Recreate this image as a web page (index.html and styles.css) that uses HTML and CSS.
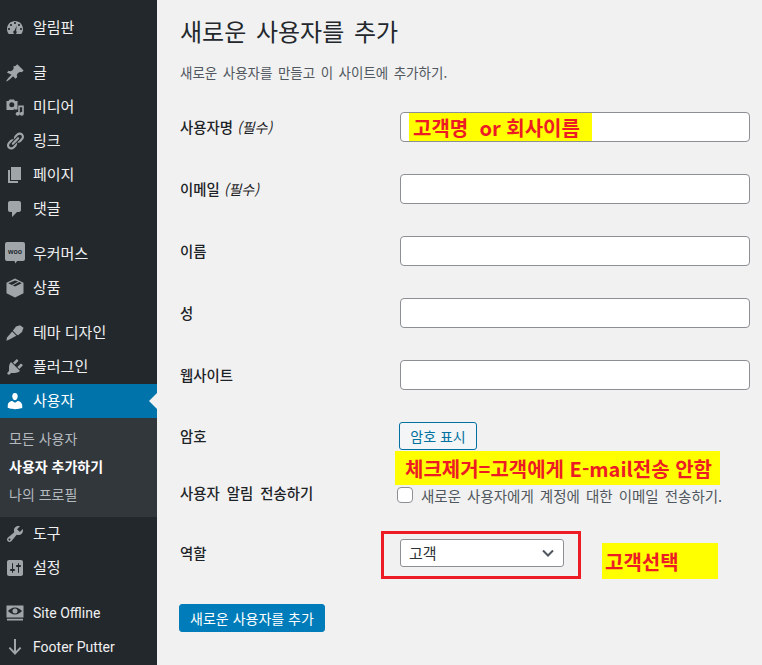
FILE: index.html
```html
<!DOCTYPE html>
<html lang="ko">
<head>
    <meta charset="UTF-8">
    <title>새로운 사용자를 추가</title>
    <link rel="stylesheet" href="styles.css">
</head>
<body>
<div class="wrap">
    <div class="sidebar">
        <ul class="menu">
            <li class="item"><svg class="ico" viewBox="0 0 20 20"><path d="M3.760 16h12.480c1.100-1.370 1.760-3.110 1.760-5 0-4.420-3.580-8-8-8s-8 3.580-8 8c0 1.890.660 3.630 1.760 5zM10 4c.550 0 1 .450 1 1s-.450 1-1 1-1-.450-1-1 .450-1 1-1zM6 6c.550 0 1 .450 1 1s-.450 1-1 1-1-.450-1-1 .450-1 1-1zm8 0c.550 0 1 .450 1 1s-.450 1-1 1-1-.450-1-1 .450-1 1-1zM4 10c.550 0 1 .450 1 1s-.450 1-1 1-1-.450-1-1 .450-1 1-1zm12 0c.550 0 1 .450 1 1s-.450 1-1 1-1-.450-1-1 .450-1 1-1zm-4.300-2.500l-.600 5.300c.400.400.600.900.600 1.400 0 1-.800 1.800-1.700 1.800s-1.700-.800-1.700-1.800c0-.800.500-1.500 1.300-1.700z" fill-rule="evenodd"/></svg>알림판</li>
            <li class="sep"></li>
            <li class="item"><svg class="ico" viewBox="0 0 20 20"><path d="M10.440 3.020l1.820-1.820 6.360 6.350-1.830 1.820c-1.050-.680-2.480-.570-3.410.360l-.750.750c-.920.930-1.040 2.350-.350 3.410l-1.830 1.820-2.410-2.410-2.800 2.790c-.420.420-3.380 2.710-3.800 2.290s1.860-3.390 2.280-3.810l2.790-2.790L1.900 9.600l1.830-1.820c1.050.690 2.480.570 3.400-.360l.750-.750c.930-.920 1.050-2.350.360-3.400z"/></svg>글</li>
            <li class="item"><svg class="ico" viewBox="0 0 20 20"><path d="M4.500 2.500h4.500l1 1.500h2.500v8.500H9.400l-.4-1.200h-.2V13H1.500V4h2zM6.800 5.300a2.500 2.500 0 1 0 0 5 2.500 2.500 0 0 0 0-5z" fill-rule="evenodd"/><path d="M18.800 8.500v8.300a2.100 1.800 0 1 1-1.600-1.700v-4.900h-2.400v6.600a2.100 1.800 0 1 1-1.600-1.700V8.500z"/></svg>미디어</li>
            <li class="item"><svg class="ico" viewBox="0 0 20 20"><path d="M17.740 2.760c1.680 1.690 1.680 4.410 0 6.100l-1.530 1.520c-1.120 1.120-2.700 1.490-4.140 1.120l2.620-2.620.76-.77.76-.76c.84-.84.84-2.200 0-3.040-.84-.85-2.200-.85-3.040 0l-.77.76-3.380 3.380c-.37-1.440 0-3.020 1.120-4.140l1.520-1.530c1.690-1.680 4.420-1.680 6.100 0zM8.590 13.430l5.340-5.340c.42-.42.42-1.100 0-1.520-.44-.43-1.130-.39-1.530 0l-5.330 5.340c-.42.42-.42 1.100 0 1.520.44.43 1.130.39 1.520 0zm-.76 2.290l4.140-4.140c.38 1.440 0 3.020-1.120 4.140l-1.520 1.520c-1.690 1.690-4.410 1.690-6.100 0-1.690-1.680-1.690-4.410 0-6.090l1.520-1.530c1.120-1.120 2.700-1.490 4.140-1.120l-4.140 4.140c-.85.84-.85 2.200 0 3.050.84.84 2.200.84 3.040 0z"/></svg>링크</li>
            <li class="item"><svg class="ico" viewBox="0 0 20 20"><path d="M6 15V2h10v13H6zm-1 1h8v2H3V5h2v11z"/></svg>페이지</li>
            <li class="item"><svg class="ico" viewBox="0 0 20 20"><path d="M5 2h9c1.100 0 2 .9 2 2v7c0 1.100-.9 2-2 2h-2l-5 5v-5H5c-1.100 0-2-.9-2-2V4c0-1.100.9-2 2-2z"/></svg>댓글</li>
            <li class="sep"></li>
            <li class="item"><svg class="ico ico-woo" viewBox="0 0 20 22"><path d="M2 0h16a2 2 0 0 1 2 2v15a2 2 0 0 1-2 2h-6l-1.500 2.500L9.500 19H2a2 2 0 0 1-2-2V2a2 2 0 0 1 2-2z"/><text class="woo" x="10" y="12" text-anchor="middle">woo</text></svg>우커머스</li>
            <li class="item"><svg class="ico" viewBox="0 0 20 20"><path d="M10 .5l8.500 4.300v10.400L10 19.500l-8.500-4.300V4.800zM3.300 5.200L10 8.600l6.700-3.400-2.400-1.200-6.600 3.400-.9-.5 6.500-3.400L10 2.500z" fill-rule="evenodd"/></svg>상품</li>
            <li class="sep"></li>
            <li class="item"><svg class="ico" viewBox="0 0 20 20"><path d="M11 3.500L15 2.300l3.500 2.500-1.500 4.300-4 3.100-1.200-.4-4-4z"/><path d="M7.200 8.600l4.200 4.200-2 .9-5 2.800-3 1.300.6-3.200z"/></svg>테마 디자인</li>
            <li class="item"><svg class="ico" viewBox="0 0 20 20"><path d="M13.110 4.360L9.870 7.600 8 5.730l3.240-3.240c.35-.34 1.050-.2 1.560.32.52.51.66 1.210.31 1.550zm-8 1.770l.91-1.120 9.010 9.010-1.190.84c-.71.71-2.630 1.160-3.820 1.160H6.140L4.900 17.260c-.59.59-1.540.59-2.120 0-.59-.58-.59-1.530 0-2.120l1.240-1.240v-3.880c0-1.130.52-3.070 1.090-3.890zm7.260 3.970l3.240-3.240c.34-.35 1.040-.21 1.550.31.52.51.66 1.210.31 1.550l-3.240 3.250z"/></svg>플러그인</li>
            <li class="item active"><svg class="ico" viewBox="0 0 20 20"><path d="M10 9.250c-2.270 0-2.730-3.440-2.730-3.440C7 4.020 7.820 2 9.970 2c2.160 0 2.980 2.020 2.710 3.810 0 0-.41 3.440-2.680 3.440zm0 2.570L12.720 10c2.390 0 4.520 2.330 4.520 4.530v2.490s-3.650 1.130-7.240 1.130c-3.650 0-7.240-1.130-7.240-1.130v-2.490c0-2.250 1.940-4.480 4.470-4.480z"/></svg>사용자</li>
            <li class="sub">
                <a class="sub-link">모든 사용자</a>
                <a class="sub-link current">사용자 추가하기</a>
                <a class="sub-link">나의 프로필</a>
            </li>
            <li class="item"><svg class="ico" viewBox="0 0 20 20"><path d="M16.680 9.770c-1.340 1.340-3.300 1.670-4.950.99l-5.410 6.520c-.99.99-2.590.99-3.570 0-.99-.98-.99-2.580 0-3.570l6.520-5.420c-.68-1.650-.35-3.610.99-4.950 1.280-1.280 3.120-1.620 4.720-1.060l-2.890 2.890 2.820 2.820 2.860-2.870c.53 1.580.18 3.410-1.090 4.670zM3.810 16.210c.4.390 1.030.39 1.420 0 .4-.4.4-1.030 0-1.430-.39-.39-1.020-.39-1.420 0-.4.4-.4 1.030 0 1.430z"/></svg>도구</li>
            <li class="item"><svg class="ico" viewBox="0 0 20 20"><path d="M18 16V4c0-1.100-.9-2-2-2H4c-1.100 0-2 .9-2 2v12c0 1.100.9 2 2 2h12c1.100 0 2-.9 2-2zM8 11h1c.55 0 1 .45 1 1s-.45 1-1 1H8v1.500c0 .28-.22.5-.5.5s-.5-.22-.5-.5V13H6c-.55 0-1-.45-1-1s.45-1 1-1h1V5.500c0-.28.22-.5.5-.5s.5.22.5.5V11zm5-2h-1c-.55 0-1-.45-1-1s.45-1 1-1h1V5.500c0-.28.22-.5.5-.5s.5.22.5.5V7h1c.55 0 1 .45 1 1s-.45 1-1 1h-1v5.500c0 .28-.22.5-.5.5s-.5-.22-.5-.5V9z"/></svg>설정</li>
            <li class="sep"></li>
            <li class="item latin"><svg class="ico" viewBox="0 0 20 20"><path d="M1.500 2.500h17v12h-17zM10 4.500c-3 0-5.500 2-7 3.500 1.500 1.500 4 3.500 7 3.500s5.500-2 7-3.500c-1.500-1.500-4-3.500-7-3.500zM10 5.500a2.500 2.500 0 1 1 0 5 2.500 2.500 0 0 1 0-5zM2 15.800h16v1.700H2z" fill-rule="evenodd"/></svg>Site Offline</li>
            <li class="item latin"><svg class="ico" viewBox="0 0 20 20"><path d="M9 2h2v12l4-4 1.300 1.300L10 18l-6.300-6.700L5 10l4 4z"/></svg>Footer Putter</li>
        </ul>
    </div>

    <div class="content">
        <h1 class="title">새로운 사용자를 추가</h1>
        <p class="desc">새로운 사용자를 만들고 이 사이트에 추가하기.</p>

        <div class="form">
            <div class="row"><label class="lbl">사용자명 <em>(필수)</em></label><input class="txt" type="text"></div>
            <div class="row"><label class="lbl">이메일 <em>(필수)</em></label><input class="txt" type="text"></div>
            <div class="row"><label class="lbl">이름</label><input class="txt" type="text"></div>
            <div class="row"><label class="lbl">성</label><input class="txt" type="text"></div>
            <div class="row"><label class="lbl">웹사이트</label><input class="txt" type="text"></div>
            <div class="row row-pass"><label class="lbl">암호</label><button class="btn" type="button">암호 표시</button></div>
            <div class="row row-notify"><label class="lbl">사용자 알림 전송하기</label>
                <span class="check"><span class="box"></span>새로운 사용자에게 계정에 대한 이메일 전송하기.</span>
            </div>
            <div class="row row-role"><label class="lbl">역할</label>
                <div class="select">고객
                    <svg class="caret" viewBox="0 0 12 8"><path d="M1 1.500l5 5 5-5" fill="none" stroke="#50575e" stroke-width="2"/></svg>
                </div>
            </div>
        </div>
        <button class="primary" type="button">새로운 사용자를 추가</button>

        <!-- 캡처 위에 덧칠한 표시들 -->
        <div class="mark mark-name">고객명&nbsp; or 회사이름</div>
        <div class="mark mark-mail">체크제거=고객에게 E-mail전송 안함</div>
        <div class="mark mark-role">고객선택</div>
        <div class="redbox"></div>
    </div>
</div>
</body>
</html>
```

FILE: styles.css
```css
html, body {
    margin: 0;
    height: 665px;
    overflow: hidden;
    background: #f1f1f1;
}
body {
    font-family: "Noto Sans CJK KR", "Liberation Sans", sans-serif;
    font-size: 13px;
    color: #2c3338;
}
.wrap {
    display: flex;
    height: 665px;
}

/* sidebar */
.sidebar {
    width: 157px;
    flex: none;
    background: #23282d;
    padding-top: 11px;
    box-sizing: border-box;
}
.menu {
    list-style: none;
    margin: 0;
    padding: 0;
}
.item {
    position: relative;
    display: flex;
    align-items: center;
    height: 34px;
    box-sizing: border-box;
    padding: 0 0 4px 33px;
    color: #f0f0f1;
    font-size: 15px;
}
.latin {
    padding-bottom: 0;
    font-family: Roboto, sans-serif;
    font-size: 14px;
}
.sep {
    height: 11px;
}
.ico {
    position: absolute;
    left: 5px;
    top: 7px;
    width: 20px;
    height: 20px;
    fill: #a0a5aa;
}
.ico-woo {
    top: 5px;
    height: 22px;
}
.woo {
    font: 700 7px "Liberation Sans", sans-serif;
    fill: #23282d;
}
.active {
    background: #0073aa;
    color: #fff;
}
.active .ico {
    fill: #fff;
}
.active::after {
    content: "";
    position: absolute;
    right: 0;
    top: 9px;
    border: 8px solid transparent;
    border-right-color: #f1f1f1;
    border-left-width: 0;
}
.sub {
    background: #32373c;
    padding: 6px 0 9px;
    display: flex;
    flex-direction: column;
}
.sub-link {
    height: 28px;
    line-height: 28px;
    padding-left: 9px;
    color: #b4b9be;
    font-size: 14px;
}
.current {
    color: #fff;
    font-weight: 700;
}

/* content */
.content {
    position: relative;
    flex: 1;
    padding: 0 12px 0 23px;
}
.title {
    margin: 0;
    padding-top: 14px;
    font-size: 24px;
    font-weight: 400;
    line-height: 34px;
    word-spacing: 3px;
    color: #23282d;
}
.desc {
    margin: 15px 0 0;
    font-size: 13.5px;
    line-height: 18px;
    word-spacing: 1.7px;
    color: #50575e;
}
.form {
    margin-top: 31px;
}
.row {
    display: flex;
    align-items: center;
    height: 30px;
    margin-bottom: 32px;
}
.lbl {
    width: 220px;
    flex: none;
    padding-bottom: 2px;
    font-size: 14.4px;
    font-weight: 500;
    word-spacing: 3px;
    color: #1d2327;
}
.lbl em {
    margin-left: -3px;
    font-size: 14px;
    font-weight: 400;
}
.txt {
    width: 350px;
    height: 30px;
    box-sizing: border-box;
    border: 1px solid #8c8f94;
    border-radius: 4px;
    background: #fff;
    padding: 0 8px;
    margin: 0;
}
.btn {
    margin: 0 0 0 -1px;
    width: 78px;
    height: 28px;
    border: 1px solid #0071a1;
    border-radius: 3px;
    background: #f3f5f6;
    color: #0071a1;
    font: 14px "Noto Sans CJK KR", sans-serif;
    padding: 0;
}
.row-pass {
    height: 28px;
    margin-bottom: 30px;
}
.row-notify {
    margin-bottom: 32px;
    height: 28px;
    margin-top: -1px;
}
.check {
    display: flex;
    align-items: center;
    margin-left: -3px;
    margin-top: 4px;
    color: #50575e;
    font-size: 14.5px;
    word-spacing: 2px;
}
.box {
    width: 16px;
    height: 16px;
    box-sizing: border-box;
    border: 1px solid #8c8f94;
    border-radius: 4px;
    background: #fff;
    margin-right: 8px;
}
.row-role {
    height: 28px;
    margin-bottom: 37px;
}
.select {
    width: 164px;
    height: 28px;
    box-sizing: border-box;
    border: 1px solid #8c8f94;
    border-radius: 3px;
    background: #fff;
    padding: 0 8px 2px 8px;
    display: flex;
    align-items: center;
    justify-content: space-between;
    font-size: 15px;
}
.caret {
    width: 12px;
    height: 8px;
    margin: 2px 1px 0 0;
}
.primary {
    display: block;
    margin: 0 0 0 -1px;
    width: 146px;
    height: 28px;
    padding: 0;
    border: 1px solid #007cba;
    border-radius: 3px;
    background: #007cba;
    color: #fff;
    font: 14px "Noto Sans CJK KR", sans-serif;
}

/* 덧칠 */
.mark {
    position: absolute;
    background: #ff0;
    color: #ed1c24;
    font-size: 20px;
    font-weight: 700;
    display: flex;
    align-items: center;
    white-space: nowrap;
}
.mark-name {
    left: 252px;
    top: 113px;
    width: 179px;
    height: 28px;
    padding-left: 4px;
}
.mark-mail {
    left: 238px;
    top: 451px;
    width: 315px;
    height: 34px;
    padding-left: 10px;
}
.mark-role {
    left: 445px;
    top: 543px;
    width: 113px;
    height: 36px;
    padding-left: 3px;
}
.redbox {
    position: absolute;
    left: 224px;
    top: 531px;
    width: 194px;
    height: 42px;
    border: 3px solid #ed1c24;
}
```
